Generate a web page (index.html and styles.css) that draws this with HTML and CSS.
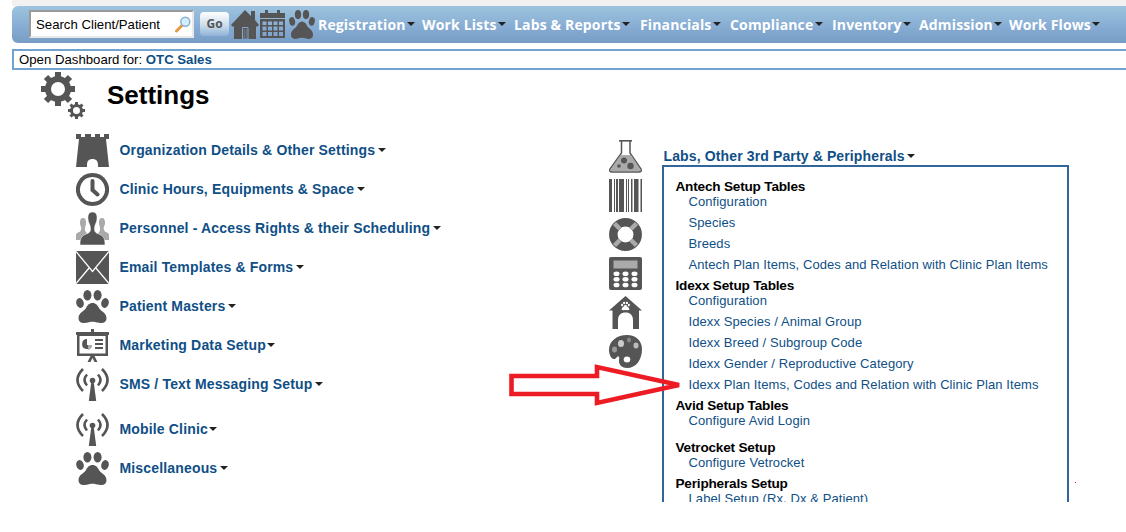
FILE: index.html
```
<!DOCTYPE html>
<html lang="en">
<head>
    <meta charset="UTF-8">
    <meta name="viewport" content="width=device-width, initial-scale=1.0">
    <title>Settings</title>
    <link rel="stylesheet" href="styles.css">
</head>
<body>
    <svg class="symbols">
        <symbol id="paw" viewBox="0 0 33 33">
            <ellipse cx="11.4" cy="5.2" rx="4" ry="5.2"/>
            <ellipse cx="21.6" cy="5.2" rx="4" ry="5.2"/>
            <ellipse cx="4" cy="13" rx="3.7" ry="5" transform="rotate(-15 4 13)"/>
            <ellipse cx="29" cy="13" rx="3.7" ry="5" transform="rotate(15 29 13)"/>
            <path d="M16.5 13c3.5 0 5.3 2.5 6.6 5.3 1.6 3 7.4 4.200 7.400 10 0 3-2 4.700-5 4.700-4 0-5-1.300-9-1.300s-5 1.300-9 1.300c-3 0-5-1.700-5-4.700 0-5.800 5.800-7 7.400-10C11.200 15.500 13 13 16.500 13z"/>
        </symbol>
        <symbol id="antenna" viewBox="0 0 33 33">
            <circle cx="16.500" cy="12.500" r="2.800"/>
            <path d="M15.300 14h2.400l2.500 19h-7.400z"/>
            <path class="line" d="M11 6.500q-5 5.500 0 11M22 6.500q5 5.500 0 11M7 1q-11 11 0 22M26 1q11 11 0 22"/>
        </symbol>
        <symbol id="gear" viewBox="0 0 34 34">
            <circle class="ring" cx="17" cy="17" r="10"/>
            <path class="teeth" d="M17 0v7M17 27v7M0 17h7M27 17h7M5 5l5 5M24 24l5 5M29 5l-5 5M10 24l-5 5"/>
        </symbol>
    </svg>

    <div class="top-strip"></div>
    <div class="navbar">
        <div class="search">
            <span>Search Client/Patient</span>
            <svg width="16" height="17" viewBox="0 0 16 17">
                <path d="M1.500 15l5.500-5.500" stroke="#e59a45" stroke-width="3" stroke-linecap="round"/>
                <circle cx="10.300" cy="5.700" r="4.500" fill="#d2effc" stroke="#8faed0" stroke-width="1.500"/>
            </svg>
        </div>
        <div class="go">Go</div>
        <div class="nav-icons">
            <svg class="home" width="28" height="29" viewBox="0 0 28 29">
                <path d="M14 0l6 6V1h4v9l4 5-2 2-1-1v13H3V16l-1 1-2-2z"/>
                <path class="door" d="M11.500 17.500h5.500V29h-5.500z"/>
                <path d="M13.200 19v9M15.200 19v9" stroke="#7b8895" stroke-width=".8"/>
            </svg>
            <svg width="25" height="29" viewBox="0 0 25 29">
                <path d="M0 3h5V0h3v3h9V0h3v3h5v5H0z"/>
                <path fill-rule="evenodd" d="M0 9h25v19H0zM2.500 11.500v3.500h4v-3.500zM8 11.500v3.500h4v-3.500zM13.500 11.500v3.500h4v-3.500zM19 11.500v3.500h4v-3.500zM2.500 16.500v4h4v-4zM8 16.500v4h4v-4zM13.500 16.500v4h4v-4zM19 16.500v4h4v-4zM2.500 22v4h4v-4zM8 22v4h4v-4zM13.500 22v4h4v-4zM19 22v4h4v-4z"/>
            </svg>
            <svg class="nav-paw" width="26" height="29" viewBox="0 0 33 33" preserveAspectRatio="none"><use href="#paw" width="33" height="33"/></svg>
        </div>
        <div class="menu">
            <span class="drop">Registration</span>
            <span class="drop">Work Lists</span>
            <span class="drop">Labs &amp; Reports</span>
            <span class="drop">Financials</span>
            <span class="drop">Compliance</span>
            <span class="drop">Inventory</span>
            <span class="drop">Admission</span>
            <span class="drop">Work Flows</span>
        </div>
    </div>

    <div class="dashboard">Open Dashboard for: <b>OTC Sales</b></div>

    <div class="heading">
        <div class="gears">
            <svg width="34" height="34"><use href="#gear"/></svg>
            <svg class="small-gear" width="17" height="17"><use href="#gear"/></svg>
        </div>
        <h1>Settings</h1>
    </div>

    <div class="content">
        <div class="settings">
            <div class="row">
                <svg viewBox="0 0 33 33"><path d="M0 0h5v3h4V0h6v3h4V0h5v3h4V0h5v5h-3l3 28H22v-2c0-4-2-6-5.500-6S11 27 11 31v2H0L3 5H0z"/></svg>
                <span class="drop">Organization Details &amp; Other Settings</span>
            </div>
            <div class="row">
                <svg viewBox="0 0 33 33"><path class="clock" d="M16.500 2a14.500 14.500 0 1 0 .01 0zM16.500 8v9l5 4.500"/></svg>
                <span class="drop">Clinic Hours, Equipments &amp; Space</span>
            </div>
            <div class="row">
                <svg viewBox="0 0 33 33">
                    <path class="light" d="M7 6c2.500 0 3 2 3 5s-1.500 4-1 7 3 2 3 10H0v-5c0-3 4-2 5-5s-1-4-1-7 .5-5 3-5zM26 6c-2.500 0-3 2-3 5s1.500 4 1 7-3 2-3 10h12v-5c0-3-4-2-5-5s1-4 1-7-.5-5-3-5z"/>
                    <path stroke="#fff" stroke-width=".5" d="M16.500 0c4 0 4.700 3 4.500 7-.2 4-2.500 5-2.500 10 0 5 4 4 7 6.500 3 2 3.500 4.500 3.500 9.500H4c0-5 .5-7.500 3.500-9.500 3-2.500 7-1.500 7-6.500 0-5-2.300-6-2.500-10-.2-4 .5-7 4.500-7z"/>
                </svg>
                <span class="drop">Personnel - Access Rights &amp; their Scheduling</span>
            </div>
            <div class="row">
                <svg viewBox="0 0 33 33"><path d="M0 0h33v33H0z"/><path d="M0 .5l16.500 20L33 .5M0 32.500l13.500-16M33 32.500l-13.500-16" fill="none" stroke="#fff" stroke-width="1.300"/></svg>
                <span class="drop">Email Templates &amp; Forms</span>
            </div>
            <div class="row">
                <svg><use href="#paw"/></svg>
                <span class="drop">Patient Masters</span>
            </div>
            <div class="row">
                <svg viewBox="0 0 33 33">
                    <path d="M15 0h3v3h15v3H0V3h15z"/>
                    <path fill-rule="evenodd" d="M1 6h31v21H1zM3.500 7v17.500h26V7zM14.500 27h4l3 6H18.500l-2-4-2 4H11.500z"/>
                    <path d="M11 10v6h5a5 5 0 1 1-5-6z"/><path class="light" d="M12 16h4q0 4-4 5z"/>
                    <path d="M19 10h8v2h-8zM19 14h8v2h-8zM19 18h8v2h-8z"/>
                </svg>
                <span class="drop tight">Marketing Data Setup</span>
            </div>
            <div class="row sms">
                <svg><use href="#antenna"/></svg>
                <span class="drop">SMS / Text Messaging Setup</span>
            </div>
            <div class="row">
                <svg><use href="#antenna"/></svg>
                <span class="drop tight">Mobile Clinic</span>
            </div>
            <div class="row">
                <svg><use href="#paw"/></svg>
                <span class="drop">Miscellaneous</span>
            </div>
        </div>

        <div class="side-icons">
            <svg viewBox="0 0 33 33">
                <path d="M12.500 1v12L1 29q-1 3 2 3h27q3 0 2-3L21 13V1" fill="#fff" stroke="#555" stroke-width="1.500"/>
                <path class="light" d="M11.500 15h10.500l9 14q1 2-1 2H3q-2 0-1-2z"/>
                <path d="M10 0h13v1.600H10z"/>
                <circle cx="15" cy="20.500" r="3"/><circle cx="21.500" cy="26" r="3.200"/><circle cx="10" cy="26" r="1.800"/>
            </svg>
            <svg viewBox="0 0 33 33"><path d="M0 0h3v33H0zM5 0h1v33H5zM7 0h2v33H7zM10 0h5v33h-5zM17 0h1v33h-1zM19 0h1v33h-1zM22 0h1.500v33H22zM25 0h4.500v33H25zM31.500 0H33v33h-1.500z"/></svg>
            <svg viewBox="0 0 33 33">
                <circle class="buoy" cx="16.500" cy="16.500" r="12.200"/>
                <path d="M5.500 5.500l5.500 5.500M22 22l5.500 5.500M27.500 5.500l-5.500 5.500M11 22l-5.500 5.500" stroke="#aaa" stroke-width="4.500"/>
            </svg>
            <svg viewBox="0 0 33 33">
                <rect width="33" height="33" rx="2"/><path class="light" d="M4.500 3.500h24v8h-24z"/>
                <g fill="#fff"><ellipse cx="7.500" cy="16.700" rx="3" ry="2.300"/><ellipse cx="16.500" cy="16.700" rx="3" ry="2.300"/><ellipse cx="25.500" cy="16.700" rx="3" ry="2.300"/><ellipse cx="7.500" cy="22.300" rx="3" ry="2.300"/><ellipse cx="16.500" cy="22.300" rx="3" ry="2.300"/><ellipse cx="25.500" cy="22.300" rx="3" ry="2.300"/><ellipse cx="7.500" cy="28" rx="3" ry="2.300"/><ellipse cx="16.500" cy="28" rx="3" ry="2.300"/><ellipse cx="25.500" cy="28" rx="3" ry="2.300"/></g>
            </svg>
            <svg viewBox="0 0 33 33">
                <path d="M16.500 0L33 14.500h-3V33h-6V24c0-5-3-7.500-7.500-7.500S9 19 9 24v9H3.500V14.500H0z"/>
                <svg class="white" x="11.500" y="5.500" width="10" height="9"><use href="#paw" width="10" height="9"/></svg>
            </svg>
            <svg viewBox="0 0 33 33">
                <path d="M18 0c9 0 15 6 15 14 0 11-6 19-15 19-5 0-8-3-8-7 0-3 1-4.500-1-4.500-1.500 0-1.500 2.500-4 2.500C2 24 0 19 0 15 0 6 8 0 18 0z"/>
                <ellipse cx="5.500" cy="14.500" rx="2.500" ry="3" fill="#999"/><ellipse cx="12" cy="8.500" rx="3" ry="3.500" fill="#ccc"/>
                <ellipse cx="20" cy="5" rx="2" ry="2.500" fill="#888"/><ellipse cx="27" cy="10.500" rx="2.500" ry="3" fill="#bbb"/>
                <ellipse cx="18" cy="24.500" rx="3.300" ry="3" fill="#fff"/>
            </svg>
        </div>

        <div class="labs">
            <span class="drop labs-title">Labs, Other 3rd Party &amp; Peripherals</span>
            <div class="panel">
                <h2>Antech Setup Tables</h2>
                <a>Configuration</a>
                <a>Species</a>
                <a>Breeds</a>
                <a>Antech Plan Items, Codes and Relation with Clinic Plan Items</a>
                <h2>Idexx Setup Tables</h2>
                <a>Configuration</a>
                <a>Idexx Species / Animal Group</a>
                <a>Idexx Breed / Subgroup Code</a>
                <a>Idexx Gender / Reproductive Category</a>
                <a>Idexx Plan Items, Codes and Relation with Clinic Plan Items</a>
                <h2>Avid Setup Tables</h2>
                <a class="last">Configure Avid Login</a>
                <h2>Vetrocket Setup</h2>
                <a>Configure Vetrocket</a>
                <h2>Peripherals Setup</h2>
                <a>Label Setup (Rx, Dx &amp; Patient)</a>
            </div>
        </div>
    </div>

    <svg class="arrow" width="180" height="46" viewBox="505 362 180 46">
        <path d="M511.500 376H597v-9l82 18-82 18v-9h-85.500z"/>
    </svg>
    <div class="dot"></div>
</body>
</html>
```
FILE: styles.css
```
body{
    margin: 0;
    width: 1126px;
    height: 532px;
    overflow: hidden;
    background: #fff;
    font-family: "Liberation Sans", Arial, sans-serif;
}
svg{
    display: block;
    fill: #555;
}
.symbols{
    position: absolute;
    width: 0;
    height: 0;
}
.line{
    fill: none;
    stroke: #555;
    stroke-width: 2.6;
}
.clock{
    fill: none;
    stroke: #555;
    stroke-width: 4;
    stroke-linecap: round;
}
.buoy{
    fill: none;
    stroke: #555;
    stroke-width: 8.5;
}
.light{
    fill: #aaa;
}
.white{
    fill: #fff;
}
.ring{
    fill: none;
    stroke: #555;
    stroke-width: 6;
}
.teeth{
    stroke: #555;
    stroke-width: 6;
}
.top-strip{
    height: 6px;
    margin-left: 12px;
    background: #f1f1f1;
}
.navbar{
    display: flex;
    box-sizing: border-box;
    height: 37px;
    margin-left: 12px;
    padding: 4px 0 0 17px;
    border-radius: 6px 0 0 6px;
    background: linear-gradient(#9dc4de, #86abd3 60%, #769dc5);
}
.search{
    display: flex;
    align-items: center;
    justify-content: space-between;
    box-sizing: border-box;
    width: 165px;
    height: 28px;
    padding: 0 1px 0 5px;
    border: 2px solid;
    border-color: #999 #e8e8e8 #e8e8e8 #999;
    background: #fff;
    font-size: 13.2px;
    white-space: nowrap;
}
.go{
    width: 29px;
    height: 24px;
    margin: 2px 0 0 6px;
    border-radius: 4px;
    background: linear-gradient(#fff, #c8d9ea 60%, #8fb2d7);
    color: #555;
    font: bold 12px/24px "Open Sans", sans-serif;
    text-align: center;
}
.nav-icons{
    display: flex;
    gap: 1px;
    margin-left: 2px;
}
.nav-paw{
    margin-left: 3px;
}
.door{
    fill: none;
    stroke: #87a5c5;
    stroke-width: 1;
}
.menu{
    display: grid;
    grid-template-columns: 104px 92px 126px 90px 102px 87px 90px 100px;
    height: 29px;
    margin-left: 3px;
    color: #fff;
    font: bold 14px/29px "Open Sans", sans-serif;
    letter-spacing: .15px;
    white-space: nowrap;
}
.drop{
    display: flex;
    align-items: center;
}
.drop::after{
    content: "";
    margin-left: 2.5px;
    border: 4.5px solid transparent;
    border-top: 4px solid #222;
    border-bottom: 0;
}
.menu .drop::after{
    margin: -1px 0 0 1.5px;
}
.row .tight::after{
    margin-left: 1px;
}
.dashboard{
    box-sizing: border-box;
    height: 21px;
    margin: 6px 0 0 12px;
    padding-left: 5px;
    border: 2px solid #70a3cf;
    border-right: 0;
    font-size: 13.2px;
    line-height: 17px;
}
.dashboard b{
    color: #0f4f86;
}
.heading{
    display: flex;
    height: 64px;
    padding-left: 41px;
}
.gears{
    display: flex;
    width: 66px;
    padding-top: 2px;
}
.small-gear{
    margin: 30px 0 0 -7px;
}
h1{
    margin: 9px 0 0;
    font-size: 26px;
    line-height: 32px;
}
.content{
    display: flex;
    height: 368px;
    overflow: hidden;
    color: #0f4f86;
}
.settings{
    width: 533px;
    padding-left: 76px;
}
.row{
    display: flex;
    gap: 10.5px;
    height: 33px;
    margin-bottom: 6px;
    font-size: 14px;
    font-weight: bold;
    letter-spacing: .16px;
    white-space: nowrap;
}
.row .drop{
    height: 31px;
}
.row svg, .side-icons svg{
    flex: none;
    width: 33px;
    height: 33px;
}
.row.sms{
    margin-bottom: 12px;
}
.side-icons{
    display: flex;
    flex-direction: column;
    gap: 6px;
    width: 53px;
    padding-top: 6px;
}
.side-icons svg svg{
    width: 10px;
    height: 9px;
}
.labs{
    width: 407px;
    padding-top: 13px;
}
.labs-title{
    height: 18px;
    padding-left: 1.5px;
    font-size: 14px;
    font-weight: bold;
    letter-spacing: .13px;
}
.panel{
    height: 400px;
    padding: 12px 11.5px;
    box-sizing: border-box;
    border: 2px solid #32659a;
    font-size: 13px;
    line-height: 15px;
    letter-spacing: .09px;
    white-space: nowrap;
}
.panel h2{
    margin: 0;
    color: #000;
    font-size: 13.6px;
    line-height: 15px;
    letter-spacing: -.2px;
}
.panel a{
    display: block;
    margin: 0 0 6px 13px;
}
.panel a.last{
    margin-bottom: 12px;
}
.arrow{
    position: absolute;
    left: 505px;
    top: 362px;
}
.arrow path{
    fill: none;
    stroke: #ed1c24;
    stroke-width: 4.6;
}
.dot{
    position: absolute;
    left: 1075px;
    top: 482px;
    width: 1px;
    height: 1px;
    background: #ed1c24;
}
```
